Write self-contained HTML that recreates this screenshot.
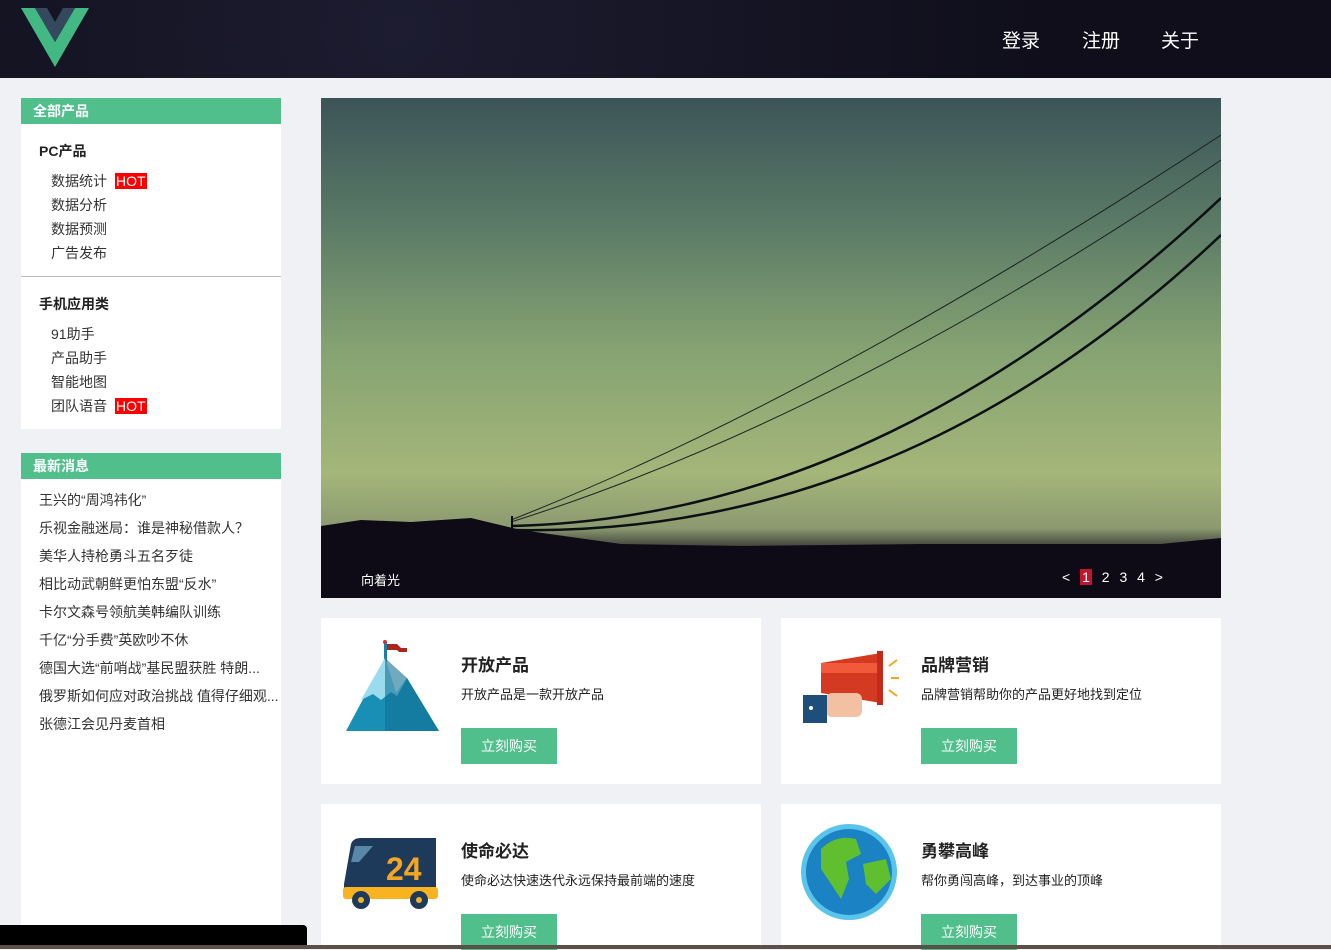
<!DOCTYPE html>
<html><head><meta charset="utf-8"><style>
*{margin:0;padding:0;box-sizing:border-box}
body{width:1331px;height:949px;overflow:hidden;background:#f0f1f5;font-family:"Liberation Sans","Noto Sans CJK SC",sans-serif;position:relative;color:#222}
.hd{position:absolute;left:0;top:0;width:1331px;height:78px;background:radial-gradient(circle at 30% 40%,#1d1c30,#0f0e1a 70%)}
.nav{position:absolute;top:26px;color:#fff;font-size:19px}
.side{position:absolute;left:21px;width:260px;background:#fff}
.gh{background:#50bf8b;color:#fff;font-weight:bold;font-size:14px;height:26px;line-height:26px;padding-left:12px}
.st{font-weight:bold;font-size:14px;position:absolute;left:18px}
.it{position:absolute;left:30px;font-size:14px;color:#333}
.hot{background:#f00;color:#fff;padding:0 1px;margin-left:8px}
.nw{position:absolute;left:18px;font-size:14px;color:#333;white-space:nowrap;width:240px;overflow:hidden}
.card{position:absolute;width:440px;background:#fff}
.card h3{position:absolute;left:140px;top:33px;font-size:17px}
.card p{position:absolute;left:140px;top:66px;font-size:13px}
.btn{position:absolute;left:140px;top:110px;width:96px;height:36px;background:#50bf8b;color:#fff;font-size:14px;text-align:center;line-height:36px}
.ic{position:absolute;left:20px;top:20px}
</style></head><body>
<div class="hd">
<svg style="position:absolute;left:21px;top:8px" width="68" height="59" viewBox="0 0 68 59"><polygon points="0,0 14,0 34,34 54,0 68,0 34,59" fill="#42b883"/><polygon points="14,0 26,0 34,14 42,0 54,0 34,34" fill="#35495e"/></svg>
<div class="nav" style="left:1002px">登录</div><div class="nav" style="left:1082px">注册</div><div class="nav" style="left:1161px">关于</div>
</div>
<div class="side" style="top:98px;height:331px">
<div class="gh">全部产品</div>
<div class="st" style="top:43px">PC产品</div>
<div class="it" style="top:73px">数据统计<span class="hot">HOT</span></div>
<div class="it" style="top:97px">数据分析</div>
<div class="it" style="top:121px">数据预测</div>
<div class="it" style="top:145px">广告发布</div>
<div style="position:absolute;top:178px;left:0;width:260px;border-top:1px solid #bbb"></div>
<div class="st" style="top:196px">手机应用类</div>
<div class="it" style="top:226px">91助手</div>
<div class="it" style="top:250px">产品助手</div>
<div class="it" style="top:274px">智能地图</div>
<div class="it" style="top:298px">团队语音<span class="hot">HOT</span></div>
</div>
<div class="side" style="top:453px;height:496px">
<div class="gh">最新消息</div>
<div class="nw" style="top:37px">王兴的“周鸿祎化”</div>
<div class="nw" style="top:65px">乐视金融迷局：谁是神秘借款人？</div>
<div class="nw" style="top:93px">美华人持枪勇斗五名歹徒</div>
<div class="nw" style="top:121px">相比动武朝鲜更怕东盟“反水”</div>
<div class="nw" style="top:149px">卡尔文森号领航美韩编队训练</div>
<div class="nw" style="top:177px">千亿“分手费”英欧吵不休</div>
<div class="nw" style="top:205px">德国大选“前哨战”基民盟获胜 特朗...</div>
<div class="nw" style="top:233px">俄罗斯如何应对政治挑战 值得仔细观...</div>
<div class="nw" style="top:261px">张德江会见丹麦首相</div>
</div>
<div style="position:absolute;left:321px;top:98px;width:900px;height:500px;overflow:hidden;background:linear-gradient(180deg,#3c5458 0%,#5a7a66 25%,#85a272 50%,#a4b679 75%,#8c9a70 86%,#120e1c 92%,#0a0712 100%)">
<svg width="900" height="500" style="position:absolute;left:0;top:0"><path d="M0,428 L40,422 L90,424 L150,420 L200,432 L300,446 L420,448 L600,446 L840,446 L900,440 L900,500 L0,500Z" fill="#0e0b16"/>
<path d="M190,422 Q500,300 900,37" stroke="#1a2424" stroke-width="1" fill="none"/>
<path d="M190,424 Q520,320 900,62" stroke="#1a2424" stroke-width="1" fill="none"/>
<path d="M190,428 Q560,420 900,100" stroke="#0c1014" stroke-width="2.5" fill="none"/>
<path d="M190,432 Q580,440 900,137" stroke="#0c1014" stroke-width="2.5" fill="none"/>
<rect x="190" y="418" width="2" height="40" fill="#0c0a12"/></svg>
<div style="position:absolute;left:40px;top:472px;color:#fff;font-size:13px">向着光</div>
<div style="position:absolute;left:741px;top:471px;color:#fff;font-size:14px;word-spacing:6px">&lt; <span style="background:#c0152f;padding:0 2px">1</span> 2 3 4 &gt;</div>
</div>
<div class="card" style="left:321px;top:618px;height:166px">
<svg class="ic" width="100" height="100" viewBox="0 0 100 100"><rect x="43" y="4" width="3" height="20" fill="#1b7ea5"/><circle cx="44" cy="4" r="2" fill="#c33"/><path d="M46,6h10l4,4h6v4h-8l-2,-2h-10z" fill="#a8261c"/><polygon points="44,20 5,93 98,93 66,40 55,55" fill="#1a8fb5"/><polygon points="44,20 20,62 32,56 40,62 50,54 56,58 66,40 55,55" fill="#9adcee"/><polygon points="44,20 44,93 98,93 66,40" fill="#126f94" opacity=".6"/></svg>
<h3>开放产品</h3><p>开放产品是一款开放产品</p><div class="btn">立刻购买</div></div>
<div class="card" style="left:781px;top:618px;height:166px">
<svg class="ic" width="100" height="100" viewBox="0 0 100 100"><polygon points="20,25 80,15 80,65 20,55" fill="#d43a22"/><rect x="20" y="25" width="60" height="10" fill="#f05a3a"/><rect x="76" y="13" width="6" height="54" fill="#c22b18"/><path d="M88,28l8,-6M90,40h8M88,52l8,6" stroke="#f4a623" stroke-width="2"/><rect x="25" y="55" width="36" height="24" rx="6" fill="#f3c0a3"/><rect x="2" y="57" width="24" height="28" fill="#1d4f7a"/><circle cx="10" cy="70" r="2" fill="#fff"/></svg>
<h3>品牌营销</h3><p>品牌营销帮助你的产品更好地找到定位</p><div class="btn">立刻购买</div></div>
<div class="card" style="left:321px;top:804px;height:145px">
<svg class="ic" width="100" height="90" viewBox="0 0 100 90"><path d="M10,20 Q12,14 20,14 H95 V70 H3 V60z" fill="#1d3a5a"/><path d="M14,22h18l-14,16h-8z" fill="#5a88a8"/><text x="45" y="56" font-size="32" font-weight="bold" fill="#f4a623" font-family="Liberation Sans">24</text><rect x="2" y="63" width="95" height="12" rx="3" fill="#f9b321"/><circle cx="20" cy="76" r="9" fill="#1d3a5a"/><circle cx="20" cy="76" r="3" fill="#f9b321"/><circle cx="78" cy="76" r="9" fill="#1d3a5a"/><circle cx="78" cy="76" r="3" fill="#f9b321"/></svg>
<h3>使命必达</h3><p>使命必达快速迭代永远保持最前端的速度</p><div class="btn">立刻购买</div></div>
<div class="card" style="left:781px;top:804px;height:145px">
<svg class="ic" style="top:20px" width="100" height="100" viewBox="0 0 100 100"><circle cx="48" cy="48" r="48" fill="#5bc4ea"/><circle cx="48" cy="48" r="43" fill="#1b82c4"/><path d="M20,25 Q35,10 55,15 L60,30 L45,38 L48,55 L40,75 L30,60 L20,45z" fill="#5fbf2e"/><path d="M62,40 L85,35 L90,55 L75,70 L65,60z" fill="#5fbf2e"/></svg>
<h3>勇攀高峰</h3><p>帮你勇闯高峰，到达事业的顶峰</p><div class="btn">立刻购买</div></div>
<div style="position:absolute;left:0;top:925px;width:307px;height:24px;background:#000;border-radius:0 4px 0 0"></div>
<div style="position:absolute;left:0;top:945px;width:1331px;height:4px;background:#5a5048"></div>
</body></html>
